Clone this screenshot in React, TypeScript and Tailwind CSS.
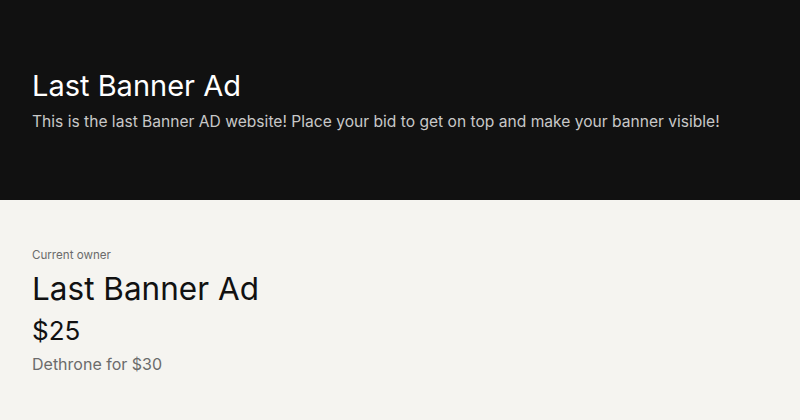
export default function App() {
    return (
        <div className="min-h-screen bg-[#f5f4f0] font-['Inter',sans-serif]">
            {/* Header */}
            <header className="h-[200px] bg-[#111111] px-8 pt-[66px]">
                <h1 className="text-[29px] leading-[40px] text-white">Last Banner Ad</h1>
                <p className="mt-[4px] text-[15.6px] leading-[24px] text-[#c8c8c8]">
                    This is the last Banner AD website! Place your bid to get on top and make your banner visible!
                </p>
            </header>

            {/* Current owner */}
            <section className="px-8 pt-[47px]">
                <p className="text-[11.6px] leading-[16px] text-[#6b6b6b]">Current owner</p>
                <h2 className="mt-[6px] text-[31.5px] leading-[40px] text-[#111111]">Last Banner Ad</h2>
                <p className="mt-[4px] text-[26px] leading-[36px] text-[#111111]">$25</p>
                <p className="mt-[3px] text-[16px] leading-[24px] text-[#6b6b6b]">Dethrone for $30</p>
            </section>
        </div>
    )
}
